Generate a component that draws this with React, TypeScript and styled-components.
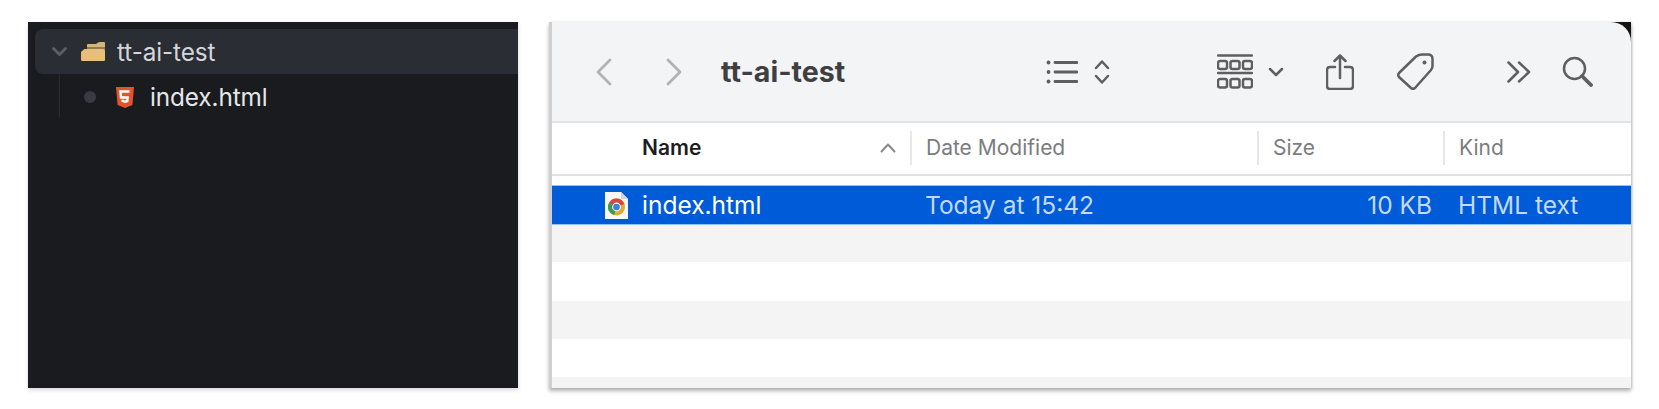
import React from 'react';
import styled, { createGlobalStyle } from 'styled-components';

const GlobalStyle = createGlobalStyle`
  html, body { margin: 0; padding: 0; background: #fff; }
  body { font-family: Inter, "Liberation Sans", sans-serif; }
`;

const Page = styled.div`
  width: 1659px;
  height: 409px;
  padding: 22px 0 0 28px;
  box-sizing: border-box;
  display: flex;
  align-items: flex-start;
  gap: 31px;
`;

/* editor sidebar */
const Sidebar = styled.aside`
  width: 490px;
  height: 366px;
  padding: 7px 0 0 7px;
  box-sizing: border-box;
  background: #191b1f;
  box-shadow: 0 2px 4px rgba(0, 0, 0, 0.16);
`;
const FolderRow = styled.div`
  height: 45px;
  display: flex;
  align-items: center;
  padding-left: 17px;
  background: #2a2d34;
  border-radius: 8px 0 0 8px;
  color: #d4d6da;
  font-size: 24.3px;
  letter-spacing: -0.1px;
`;
const FolderName = styled.span`
  margin-left: 12px;
`;
const Children = styled.div`
  height: 43px;
  margin-left: 24px;
  border-left: 1px solid #2a2c32;
  display: flex;
  align-items: flex-start;
`;
const FileRow = styled.div`
  display: flex;
  align-items: center;
  height: 46px;
  padding-left: 24px;
  color: #e6e7ea;
  font-size: 24.3px;
  letter-spacing: -0.1px;
`;
const Dot = styled.span`
  width: 12px;
  height: 12px;
  border-radius: 50%;
  background: #393b44;
`;
const FileName = styled.span`
  margin-left: 16px;
`;

/* finder window */
const Finder = styled.section`
  width: 1082px;
  height: 366px;
  box-sizing: border-box;
  border-left: 3px solid #cfcfd1;
  box-shadow: 0 3px 4px rgba(0, 0, 0, 0.3), 1px 0 2px rgba(0, 0, 0, 0.12);
  overflow: hidden;
  background: #141414;
`;
const Toolbar = styled.div`
  height: 101px;
  display: flex;
  align-items: center;
  background: #f3f4f6;
  border-bottom: 2px solid #e3e4e6;
  border-radius: 0 20px 0 0;
  box-sizing: border-box;
`;
const ToolIcon = styled.svg<{ $left: number }>`
  flex: none;
  margin-left: ${(p) => p.$left}px;
  fill: none;
  stroke: #5f5f62;
  stroke-width: 2.5;
  stroke-linecap: round;
  stroke-linejoin: round;
`;
const NavIcon = styled(ToolIcon)`
  stroke: #b2b2b4;
  stroke-width: 2.8;
`;
const Title = styled.h1`
  margin: 0 0 0 38px;
  width: 123px;
  font-size: 28.6px;
  font-weight: 700;
  color: #3f3f42;
  white-space: nowrap;
`;
const Columns = styled.div`
  display: grid;
  grid-template-columns: 360px 347px 186px 1fr;
  background: #fff;
`;
const Header = styled(Columns)`
  height: 53px;
  padding-bottom: 2px;
  box-sizing: border-box;
  border-bottom: 2px solid #e2e2e4;
  font-size: 21px;
  color: #7c7c7e;
`;
const HeadCell = styled.div<{ $first?: boolean }>`
  position: relative;
  display: flex;
  align-items: center;
  justify-content: space-between;
  padding-left: ${(p) => (p.$first ? 90 : 14)}px;
  padding-right: 16px;
  ${(p) => (p.$first ? 'color: #1d1d1f; font-weight: 600;' : '')}
  &:not(:last-child)::after {
    content: "";
    position: absolute;
    right: 0;
    top: 8px;
    bottom: 7px;
    width: 2px;
    background: #e8e8ea;
  }
`;
const Gap = styled.div`
  height: 10px;
  background: #fff;
`;
const Row = styled(Columns)<{ $tone: 'selected' | 'stripe' | 'plain' }>`
  height: 38.2px;
  align-items: center;
  font-size: 24.5px;
  background: ${(p) => (p.$tone === 'selected' ? '#005bd9' : p.$tone === 'stripe' ? '#f4f4f4' : '#fff')};
  color: #fff;
  ${(p) => (p.$tone === 'selected' ? 'box-shadow: 0 -1px 0 #8fc6f6, 0 1px 0 #8fc6f6; position: relative;' : '')}
`;
const NameCell = styled.div`
  display: flex;
  align-items: center;
  padding-left: 53px;
`;
const CellName = styled.span`
  margin-left: 14px;
`;
const DateCell = styled.div`
  padding-left: 13px;
  color: #c3dafa;
`;
const SizeCell = styled.div`
  text-align: right;
  padding-right: 13px;
  color: #c3dafa;
`;
const KindCell = styled.div`
  padding-left: 13px;
  color: #c3dafa;
  white-space: nowrap;
`;

const Chevron = () => (
  <svg width="15" height="9" viewBox="0 0 15 9" fill="none" stroke="#5d5f67" strokeWidth="2.8" strokeLinecap="round" strokeLinejoin="round">
    <path d="M1.5 1.5 7.5 7.5 13.5 1.5" />
  </svg>
);

const FolderIcon = () => (
  <svg width="24" height="19" viewBox="0 0 24 19" style={{ marginLeft: 14 }}>
    <path d="M6 7 V3 Q6 2 7 2 L15 2 L17 0.5 Q18 0 19 0 H23 Q24 0 24 1 V8 H6 Z" fill="#d2b47c" />
    <path d="M6 5 H24 V8 H6 Z" fill="#8f7a52" />
    <path d="M3.5 7 H22 Q24 7 24 9 V18 Q24 19 23 19 H1.5 Q0 19 0 17.5 V10.5 Q0 9.5 1 9 Z" fill="#e6c07a" />
  </svg>
);

const Html5Icon = () => (
  <svg width="18" height="21" viewBox="0 0 18 21" style={{ marginLeft: 20 }}>
    <path d="M0 0 H18 L16.4 18 9 21 1.6 18 Z" fill="#e5532d" />
    <path d="M13.5 4.5 H4.5 L5 10.5 H11.6 L11.3 14 9 14.8 6.7 14 6.6 12.6" fill="none" stroke="#fff" strokeWidth="2.4" />
  </svg>
);

const ChromeFile = () => (
  <svg width="23" height="27" viewBox="0 0 23 27">
    <path d="M0 0 H16 L23 7 V27 H0 Z" fill="#f7f7f5" />
    <path d="M16 0 L23 7 H16 Z" fill="#d5d5d5" />
    <circle cx="11.5" cy="15" r="8.5" fill="#e0a92f" />
    <path d="M11.5 15 L4 11 A8.5 8.5 0 0 1 19.4 12 Z" fill="#d4483b" />
    <path d="M11.5 15 L4 11 A8.5 8.5 0 0 0 9 23.2 Z" fill="#3d9a55" />
    <circle cx="11.5" cy="15" r="4.4" fill="#f7f7f5" />
    <circle cx="11.5" cy="15" r="3.3" fill="#3f7fdc" />
  </svg>
);

const RowFill = () => (
  <>
    <div />
    <div />
    <div />
    <div />
  </>
);

export default function App() {
  return (
    <Page>
      <GlobalStyle />
      <Sidebar>
        <FolderRow>
          <Chevron />
          <FolderIcon />
          <FolderName>tt-ai-test</FolderName>
        </FolderRow>
        <Children>
          <FileRow>
            <Dot />
            <Html5Icon />
            <FileName>index.html</FileName>
          </FileRow>
        </Children>
      </Sidebar>

      <Finder>
        <Toolbar>
          <NavIcon $left={43} width="17" height="28" viewBox="0 0 17 28">
            <path d="M15 2 3 14 15 26" />
          </NavIcon>
          <NavIcon $left={54} width="17" height="28" viewBox="0 0 17 28">
            <path d="M2 2 14 14 2 26" />
          </NavIcon>
          <Title>tt-ai-test</Title>
          <ToolIcon $left={202} width="32" height="24" viewBox="0 0 32 24">
            <path d="M9 2.5H31M9 12H31M9 21.5H31" strokeWidth="2.8" />
            <circle cx="2.5" cy="2.5" r="1.9" fill="#5f5f62" stroke="none" />
            <circle cx="2.5" cy="12" r="1.9" fill="#5f5f62" stroke="none" />
            <circle cx="2.5" cy="21.5" r="1.9" fill="#5f5f62" stroke="none" />
          </ToolIcon>
          <ToolIcon $left={16} width="16" height="26" viewBox="0 0 16 26" strokeWidth="3">
            <path d="M2 9 8 2.5 14 9M2 17 8 23.5 14 17" />
          </ToolIcon>
          <ToolIcon $left={107} width="36" height="35" viewBox="0 0 36 35" strokeWidth="2.4">
            <path d="M1 1.5H35M1 19H35" />
            <rect x="1" y="7" width="9" height="8" rx="2" />
            <rect x="13.5" y="7" width="9" height="8" rx="2" />
            <rect x="26" y="7" width="9" height="8" rx="2" />
            <rect x="1" y="25" width="9" height="8.5" rx="2" />
            <rect x="13.5" y="25" width="9" height="8.5" rx="2" />
            <rect x="26" y="25" width="9" height="8.5" rx="2" />
          </ToolIcon>
          <ToolIcon $left={15} width="16" height="10" viewBox="0 0 16 10" strokeWidth="3.2">
            <path d="M2 2 8 8 14 2" />
          </ToolIcon>
          <ToolIcon $left={42} width="28" height="36" viewBox="0 0 28 36" strokeWidth="2.4">
            <path d="M9 13H4Q1 13 1 16V32Q1 35 4 35H24Q27 35 27 32V16Q27 13 24 13H19" />
            <path d="M14 24V2M8.5 7 14 1.5 19.5 7" />
          </ToolIcon>
          <ToolIcon $left={43} width="37" height="37" viewBox="0 0 37 37" strokeWidth="2.4">
            <path d="M25 1.5H31Q35.5 1.5 35.5 6V13Q35.5 15 34 17L18 35Q16 36.5 14 35L2 24Q0.5 22 2 20L19 3.5Q22 1.5 25 1.5Z" />
            <circle cx="27.5" cy="9.5" r="2" fill="#5f5f62" stroke="none" />
          </ToolIcon>
          <ToolIcon $left={73} width="24" height="22" viewBox="0 0 24 22" strokeWidth="2.4">
            <path d="M1.5 1.5 11 11 1.5 20.5M12 1.5 22 11 12 20.5" />
          </ToolIcon>
          <ToolIcon $left={31} width="31" height="31" viewBox="0 0 31 31" strokeWidth="3">
            <circle cx="12.5" cy="12.5" r="10.5" />
            <path d="M20 20 29 29" strokeWidth="3.8" />
          </ToolIcon>
        </Toolbar>

        <Header>
          <HeadCell $first>
            Name
            <svg width="16" height="10" viewBox="0 0 16 10" fill="none" stroke="#8a8a8c" strokeWidth="2" strokeLinecap="round" strokeLinejoin="round">
              <path d="M1.5 8.5 8 1.5 14.5 8.5" />
            </svg>
          </HeadCell>
          <HeadCell>Date Modified</HeadCell>
          <HeadCell>Size</HeadCell>
          <HeadCell>Kind</HeadCell>
        </Header>
        <Gap />
        <Row $tone="selected">
          <NameCell>
            <ChromeFile />
            <CellName>index.html</CellName>
          </NameCell>
          <DateCell>Today at 15:42</DateCell>
          <SizeCell>10 KB</SizeCell>
          <KindCell>HTML text</KindCell>
        </Row>
        <Row $tone="stripe"><RowFill /></Row>
        <Row $tone="plain"><RowFill /></Row>
        <Row $tone="stripe"><RowFill /></Row>
        <Row $tone="plain"><RowFill /></Row>
        <Row $tone="stripe"><RowFill /></Row>
      </Finder>
    </Page>
  );
}
